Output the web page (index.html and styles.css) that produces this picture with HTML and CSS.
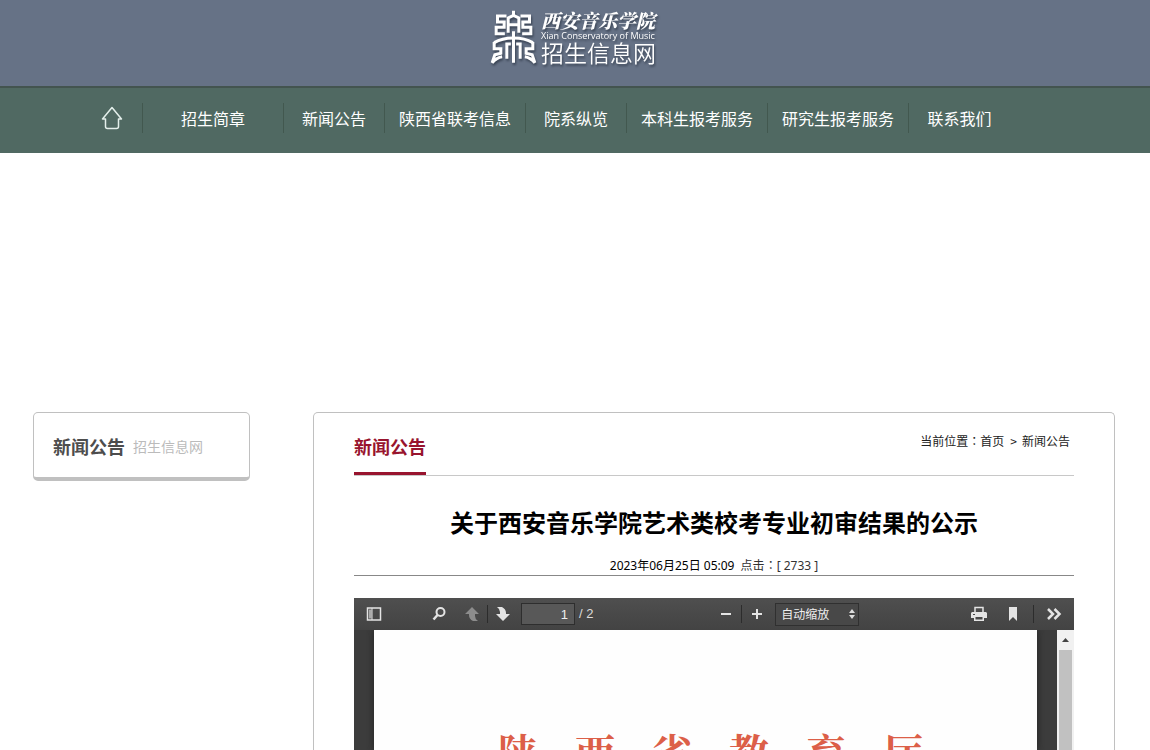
FILE: index.html
```html
<!DOCTYPE html>
<html lang="zh-CN">
<head>
<meta charset="utf-8">
<title>关于西安音乐学院艺术类校考专业初审结果的公示</title>
<link rel="stylesheet" href="styles.css">
</head>
<body>
<header class="banner">
  <a class="logo" href="#">
    <svg class="emblem" viewBox="30 30 140 168" aria-hidden="true">
      <g fill="none" stroke="#fff" stroke-width="9" stroke-linejoin="miter">
        <path d="M100 32V48M84 98V54L100 46L116 54V98M84 74H116M100 94V188"/>
        <path d="M79 48H52V66H72V82H48V101H74"/>
        <path d="M121 48H148V66H128V82H152V101H126"/>
        <path d="M42 128Q66 114 100 114Q134 114 158 128"/>
        <path d="M92 132H80V176M42 126V146H62V160L44 164L36 188Q50 172 66 170"/>
        <path d="M108 132H120V176M158 126V146H138V160L156 164L164 188Q150 172 134 170"/>
      </g>
    </svg>
    <span class="logo-text">
      <span class="logo-name">西安音乐学院</span>
      <span class="logo-en">Xian Conservatory of Music</span>
      <span class="logo-site">招生信息网</span>
    </span>
  </a>
</header>
<nav class="nav">
  <a class="nav-home" href="#" aria-label="首页">
    <svg width="22" height="24" viewBox="0 0 22 24" fill="none" stroke="#e4efeb" stroke-width="1.5" stroke-linejoin="round" stroke-linecap="round"><path d="M1.500 13L11 1.500L20.500 13H17.500V20.500Q17.500 22.500 15.500 22.500H6.500Q4.500 22.500 4.500 20.500V13Z"/></svg>
  </a>
  <a class="nav-wide" href="#">招生简章</a>
  <a class="nav-short" href="#">新闻公告</a>
  <a class="nav-wide" href="#">陕西省联考信息</a>
  <a class="nav-short" href="#">院系纵览</a>
  <a class="nav-wide" href="#">本科生报考服务</a>
  <a class="nav-wide" href="#">研究生报考服务</a>
  <a class="nav-short" href="#">联系我们</a>
</nav>
<main class="content">
  <aside class="side">
    <h2 class="side-title">新闻公告</h2>
    <span class="side-note">招生信息网</span>
  </aside>
  <article class="article">
    <div class="article-head">
      <h2 class="section-title">新闻公告</h2>
      <div class="crumbs">当前位置<span class="colon" lang="zh-TW">：</span><a href="#">首页</a><span class="crumb-mark">&gt;</span><a href="#">新闻公告</a></div>
    </div>
    <h1 class="title">关于西安音乐学院艺术类校考专业初审结果的公示</h1>
    <p class="meta"><time>2023年06月25日 05:09</time> <span class="hits">点击<span class="colon" lang="zh-TW">：</span>[ 2733 ]</span></p>
    <section class="viewer">
      <div class="toolbar">
        <div class="tools tools-left">
          <button class="tool" type="button" aria-label="切换侧栏"><svg width="16" height="16" viewBox="0 0 16 16"><path fill="none" stroke="#e4e4e4" stroke-width="1.500" d="M1.500 2H14.500V14H1.500Z"/><path fill="#aaa" d="M3 3.500H5.500V12.500H3Z"/><path stroke="#e4e4e4" d="M6 2V14"/></svg></button>
          <button class="tool find" type="button" aria-label="查找"><svg width="16" height="16" viewBox="0 0 16 16"><circle cx="9.500" cy="6" r="4" fill="none" stroke="#e4e4e4" stroke-width="2"/><path stroke="#e4e4e4" stroke-width="2.500" d="M6.500 9L2.500 13.500"/></svg></button>
          <button class="tool" type="button" aria-label="上一页" disabled><svg width="16" height="16" viewBox="0 0 16 16"><path fill="#8c8c8c" d="M8 1L15 8H11V10Q11 13 14 15H9Q5 13 5 9V8H1Z"/></svg></button>
          <span class="split"></span>
          <button class="tool" type="button" aria-label="下一页"><svg width="16" height="16" viewBox="0 0 16 16"><path fill="#e4e4e4" d="M2 1H7Q11 3 11 7V8H15L8 15L1 8H5V6Q5 3 2 1Z"/></svg></button>
          <input class="page-number" type="text" value="1" aria-label="页码">
          <span class="page-total">/ 2</span>
        </div>
        <div class="tools tools-middle">
          <button class="tool" type="button" aria-label="缩小"><svg width="16" height="16" viewBox="0 0 16 16"><path fill="#e4e4e4" d="M3 7H13V9H3Z"/></svg></button>
          <span class="split"></span>
          <button class="tool" type="button" aria-label="放大"><svg width="16" height="16" viewBox="0 0 16 16"><path fill="#e4e4e4" d="M3 7H7V3H9V7H13V9H9V13H7V9H3Z"/></svg></button>
          <span class="zoom">
            <select class="zoom-select" aria-label="缩放"><option>自动缩放</option></select>
            <svg class="zoom-arrows" width="6" height="10" viewBox="0 0 6 10"><path fill="#ddd" d="M3 0L6 4H0ZM3 10L0 6H6Z"/></svg>
          </span>
        </div>
        <div class="tools tools-right">
          <button class="tool print" type="button" aria-label="打印"><svg width="16" height="16" viewBox="0 0 16 16"><path fill="none" stroke="#e4e4e4" stroke-width="1.500" d="M4 6V1.500H12V6"/><path fill="#e4e4e4" fill-rule="evenodd" d="M1 6H15L16 7V12H13V15H3V12H0V7ZM4.500 11V13.500H11.500V11ZM2 8V9H4V8Z"/></svg></button>
          <button class="tool" type="button" aria-label="书签"><svg width="16" height="16" viewBox="0 0 16 16"><path fill="#e4e4e4" d="M4 1H12V15L8 11L4 15Z"/></svg></button>
          <span class="split"></span>
          <button class="tool" type="button" aria-label="更多工具"><svg width="16" height="16" viewBox="0 0 16 16"><path fill="none" stroke="#e4e4e4" stroke-width="2.500" d="M2 3L7 8L2 13M8.500 3L13.500 8L8.500 13"/></svg></button>
        </div>
      </div>
      <div class="document">
        <div class="page">
          <p class="page-heading"><span>陕</span><span>西</span><span>省</span><span>教</span><span>育</span><span>厅</span></p>
        </div>
        <div class="scrollbar">
          <svg width="17" height="20" viewBox="0 0 17 20"><path fill="#444" d="M5 12L8.500 8L12 12Z"/></svg>
          <div class="thumb"></div>
        </div>
      </div>
    </section>
  </article>
</main>
</body>
</html>
```
FILE: styles.css
```css
* { box-sizing: border-box; }
body {
  display: flex;
  flex-direction: column;
  height: 100vh;
  margin: 0;
  overflow: hidden;
  background: #fff;
  color: #222;
  font: 12px/18px "Noto Sans CJK SC", sans-serif;
}
a { color: inherit; text-decoration: none; }
h1, h2, p { margin: 0; }
svg { display: block; flex: none; }

.banner {
  display: flex;
  justify-content: center;
  flex: none;
  height: 86px;
  padding: 10px 4px 0 0;
  background: #667286;
}
.logo {
  display: flex;
  gap: 4px;
  height: 57px;
  color: #fff;
  filter: drop-shadow(1px 2px 1px #3a4454);
}
.emblem { width: 47px; height: 56px; }
.logo-text { display: flex; flex-direction: column; white-space: nowrap; }
.logo-name { font: italic 900 19px/20px "Noto Serif CJK SC", "Noto Sans CJK SC", serif; }
.logo-en { font: 9px/11px "Open Sans", sans-serif; }
.logo-site { font-size: 23px; line-height: 22px; font-weight: 350; }

.nav {
  display: flex;
  align-items: center;
  flex: none;
  height: 67px;
  padding: 0 82px 6px;
  border-top: 2px solid #43544f;
  background: #506962;
  color: #fff;
  font-size: 16px;
}
.nav a {
  display: flex;
  align-items: center;
  justify-content: center;
  height: 30px;
  border-right: 1px solid #42584f;
  white-space: nowrap;
}
.nav a:last-child { border-right: 0; }
.nav .nav-home { width: 61px; }
.nav-wide { width: 141px; }
.nav-short { width: 101px; }

.content {
  display: flex;
  align-items: flex-start;
  justify-content: space-between;
  flex: 1;
  gap: 63px;
  min-height: 0;
  padding: 259px 35px 0 33px;
}
.side {
  display: flex;
  align-items: center;
  gap: 8px;
  flex: none;
  width: 217px;
  padding: 20px 19px 18px;
  border: 1px solid #c0c0c0;
  border-bottom-width: 4px;
  border-radius: 5px;
}
.side-title { color: #4d4d4d; font-size: 18px; line-height: 26px; }
.side-note { color: #bbb; font-size: 14px; line-height: 26px; }

.article {
  display: flex;
  flex-direction: column;
  flex: 1;
  align-self: stretch;
  min-width: 0;
  padding: 0 40px;
  border: 1px solid #c0c0c0;
  border-bottom: 0;
  border-radius: 5px 5px 0 0;
}
.article-head {
  display: flex;
  justify-content: space-between;
  align-items: flex-start;
  flex: none;
  height: 63px;
  border-bottom: 1px solid #c8c8c8;
}
.section-title {
  height: 62px;
  padding-top: 20px;
  border-bottom: 3px solid #98142e;
  color: #98142e;
  font-size: 18px;
  line-height: 26px;
}
.crumbs { padding: 19px 4px 0 0; }
.crumb-mark { margin: 0 5px 0 6px; }
.colon { font-family: "Noto Sans CJK TC", sans-serif; }
.title {
  padding-top: 28px;
  color: #000;
  font-size: 24px;
  line-height: 36px;
  text-align: center;
}
.meta {
  flex: none;
  padding-top: 16px;
  border-bottom: 1px solid #888;
  color: #000;
  font-family: "Noto Sans", "Noto Sans CJK SC", sans-serif;
  text-align: center;
}
.hits { margin-left: 3px; color: #333; }

.viewer {
  display: flex;
  flex-direction: column;
  flex: 1;
  min-height: 0;
  margin-top: 22px;
  background: #3c3c3c;
}
.toolbar {
  display: flex;
  align-items: center;
  justify-content: space-between;
  flex: none;
  height: 32px;
  padding: 0 12px;
  background: linear-gradient(#4f4f4f, #434343);
  color: #ddd;
}
.tools { display: flex; align-items: center; }
.tools-left { gap: 7px; }
.tools-middle { gap: 7px; padding-left: 13px; }
.tools-right { gap: 12px; }
.tool {
  display: flex;
  flex: none;
  padding: 0;
  border: 0;
  background: none;
}
.find { margin: 0 10px 0 42px; }
.print { margin-right: 6px; }
.split { width: 1px; height: 18px; background: #2c2c2c; }
.page-number {
  width: 54px;
  height: 22px;
  margin-left: 3px;
  padding: 0 6px;
  border: 1px solid #2e2e2e;
  background: #585858;
  color: #eee;
  font: 13px/18px "Liberation Sans", sans-serif;
  text-align: right;
}
.page-total { margin-left: -3px; font: 13px/18px "Liberation Sans", sans-serif; }
.zoom { display: flex; align-items: center; position: relative; margin-left: 3px; }
.zoom-select {
  width: 84px;
  height: 23px;
  padding: 0 5px;
  border: 1px solid #303030;
  appearance: none;
  background: #484848;
  color: #eee;
  font: 12px/18px "Noto Sans CJK SC", sans-serif;
}
.zoom-arrows { position: absolute; right: 4px; pointer-events: none; }
.document { display: flex; flex: 1; min-height: 0; padding-left: 20px; }
.page {
  flex: 1;
  margin-right: 20px;
  overflow: hidden;
  background: #fefefe;
  box-shadow: 0 0 7px #222;
  clip-path: inset(0 -8px);
}
.page-heading {
  display: flex;
  justify-content: center;
  gap: 37px;
  padding: 97px 0 0 10px;
  color: #dc5f48;
  font: 700 40px/48px "Noto Serif CJK SC", "Noto Sans CJK SC", serif;
}
.scrollbar { flex: none; width: 17px; background: #f1f1f1; }
.thumb { height: 100%; margin: 0 2px; background: #c1c1c1; }
```
